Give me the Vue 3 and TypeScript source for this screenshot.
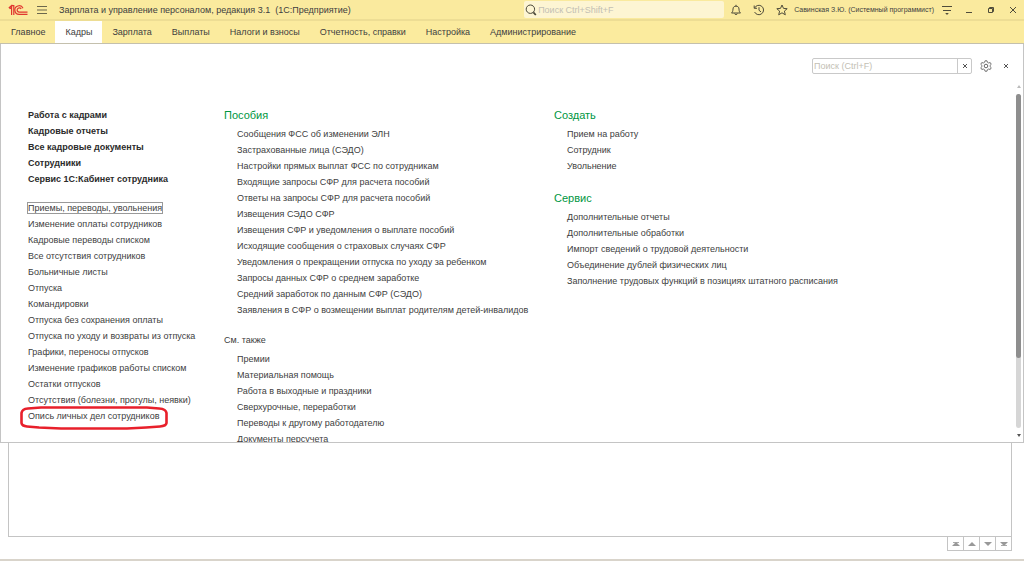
<script setup lang="ts">
import { ref } from 'vue'

const sections: string[] = [
  'Главное', 'Кадры', 'Зарплата', 'Выплаты', 'Налоги и взносы',
  'Отчетность, справки', 'Настройка', 'Администрирование',
]
const activeSection = ref('Кадры')

const primary: string[] = [
  'Работа с кадрами', 'Кадровые отчеты', 'Все кадровые документы',
  'Сотрудники', 'Сервис 1С:Кабинет сотрудника',
]
const journals: string[] = [
  'Приемы, переводы, увольнения', 'Изменение оплаты сотрудников',
  'Кадровые переводы списком', 'Все отсутствия сотрудников',
  'Больничные листы', 'Отпуска', 'Командировки',
  'Отпуска без сохранения оплаты', 'Отпуска по уходу и возвраты из отпуска',
  'Графики, переносы отпусков', 'Изменение графиков работы списком',
  'Остатки отпусков', 'Отсутствия (болезни, прогулы, неявки)',
  'Опись личных дел сотрудников',
]
const focused = journals[0]
const marked = journals[journals.length - 1]

const benefits: string[] = [
  'Сообщения ФСС об изменении ЭЛН', 'Застрахованные лица (СЭДО)',
  'Настройки прямых выплат ФСС по сотрудникам',
  'Входящие запросы СФР для расчета пособий',
  'Ответы на запросы СФР для расчета пособий', 'Извещения СЭДО СФР',
  'Извещения СФР и уведомления о выплате пособий',
  'Исходящие сообщения о страховых случаях СФР',
  'Уведомления о прекращении отпуска по уходу за ребенком',
  'Запросы данных СФР о среднем заработке',
  'Средний заработок по данным СФР (СЭДО)',
  'Заявления в СФР о возмещении выплат родителям детей-инвалидов',
]
const seeAlso: string[] = [
  'Премии', 'Материальная помощь', 'Работа в выходные и праздники',
  'Сверхурочные, переработки', 'Переводы к другому работодателю',
  'Документы персучета',
]
const create: string[] = ['Прием на работу', 'Сотрудник', 'Увольнение']
const service: string[] = [
  'Дополнительные отчеты', 'Дополнительные обработки',
  'Импорт сведений о трудовой деятельности',
  'Объединение дублей физических лиц',
  'Заполнение трудовых функций в позициях штатного расписания',
]
const globalQuery = ref('')
const menuQuery = ref('')
</script>

<template>
  <div class="app">
    <header class="titlebar">
      <svg class="logo" viewBox="0 0 20 12" width="20" height="12" aria-label="1С" role="img">
        <g fill="none" stroke="#e0362f" stroke-width="1.2">
          <path d="M.8 4 3.600 1.600V11M3.600 1.600H5.800V11M1.600 4.800 3.600 3.400" />
          <path d="M15 4.200A4.300 4.300 0 1 0 11.300 10.400H19.500" />
          <path d="M13.200 4.800A2.200 2.200 0 1 0 11.300 8.200H19.500" />
        </g>
      </svg>
      <button class="icon burger" aria-label="Главное меню">
        <svg viewBox="0 0 10 10" width="10" height="10"><path d="M0 1.500H10M0 5H10M0 8.500H10" stroke="#6b674c" fill="none" /></svg>
      </button>
      <h1 class="title">Зарплата и управление персоналом, редакция 3.1&nbsp; (1С:Предприятие)</h1>
      <label class="global-search">
        <svg viewBox="0 0 12 12" width="12" height="12"><circle cx="5.4" cy="5.2" r="4.2" fill="none" stroke="#4a4738" /><path d="M8.4 8.4 10.8 11" stroke="#4a4738" stroke-width="1.7" /></svg>
        <input v-model="globalQuery" type="text" placeholder="Поиск Ctrl+Shift+F" aria-label="Глобальный поиск" />
      </label>
      <div class="tools">
        <button class="icon" aria-label="Уведомления">
          <svg viewBox="0 0 12 12" width="12" height="12"><path d="M1.500 9H10.500C9.300 7.900 9.100 6.900 9 5 8.900 3 7.800 2.200 6 2.200S3.100 3 3 5C2.900 6.900 2.700 7.900 1.500 9ZM6 2.200V.8M4.700 9.500C4.900 11 7.100 11 7.300 9.500" fill="none" stroke="#4f4c3b" /></svg>
        </button>
        <button class="icon" aria-label="История">
          <svg viewBox="0 0 12 12" width="12" height="12"><path d="M1.600 4A4.700 4.700 0 1 1 1.600 8M1.200 1.500V4.300H4M6 3.200V6.300L8 7.900" fill="none" stroke="#4f4c3b" /></svg>
        </button>
        <button class="icon" aria-label="Избранное">
          <svg viewBox="0 0 12 12" width="12" height="12"><path d="M6 1 7.500 4.400 11.200 4.700 8.400 7.100 9.300 10.800 6 8.800 2.700 10.800 3.600 7.100 .8 4.700 4.500 4.400Z" fill="none" stroke="#4f4c3b" /></svg>
        </button>
      </div>
      <button class="user">Савинская З.Ю. (Системный программист)</button>
      <div class="window-tools">
        <button class="icon" aria-label="Настройки окна">
          <svg viewBox="0 0 12 12" width="12" height="12"><path d="M1 2.500H11M2 6.500H10" fill="none" stroke="#4f4c3b" /><path d="M4.200 9H7.800L6 11Z" fill="#4f4c3b" /></svg>
        </button>
        <button class="icon" aria-label="Свернуть">
          <svg viewBox="0 0 12 12" width="12" height="12"><path d="M3 8.500H9" stroke="#4f4c3b" /></svg>
        </button>
        <button class="icon" aria-label="Развернуть">
          <svg viewBox="0 0 12 12" width="12" height="12"><path d="M3.500 4.500H7.500V8.500H3.500ZM4.500 4.500V3.500H8.500V7.500H7.500" fill="none" stroke="#4f4c3b" /></svg>
        </button>
        <button class="icon" aria-label="Закрыть">
          <svg viewBox="0 0 12 12" width="12" height="12"><path d="M3 3 9 9M9 3 3 9" stroke="#4f4c3b" /></svg>
        </button>
      </div>
    </header>

    <nav class="sections">
      <button
        v-for="s in sections"
        :key="s"
        :class="['section', { active: s === activeSection }]"
        @click="activeSection = s"
      >{{ s }}</button>
    </nav>

    <main class="menu">
      <div class="menu-tools">
        <div class="menu-search">
          <input v-model="menuQuery" type="text" placeholder="Поиск (Ctrl+F)" aria-label="Поиск в меню" />
          <button class="icon clear" aria-label="Очистить" @click="menuQuery = ''">
            <svg viewBox="0 0 6 6" width="6" height="6"><path d="M1 1 5 5M5 1 1 5" stroke="#555" /></svg>
          </button>
        </div>
        <button class="icon" aria-label="Настройка меню">
          <svg viewBox="0 0 12 12" width="12" height="12"><path d="M5 .8H7L7.400 2.300 8.700 3 10.200 2.500 11.200 4.300 10.100 5.300V6.700L11.200 7.700 10.200 9.500 8.700 9 7.400 9.700 7 11.200H5L4.600 9.700 3.300 9 1.800 9.500 .8 7.700 1.900 6.700V5.300L.8 4.300 1.800 2.500 3.300 3 4.600 2.300Z" fill="none" stroke="#666" stroke-width=".9" /><circle cx="6" cy="6" r="1.800" fill="none" stroke="#666" /></svg>
        </button>
        <button class="icon" aria-label="Закрыть меню">
          <svg viewBox="0 0 6 6" width="6" height="6"><path d="M1 1 5 5M5 1 1 5" stroke="#555" /></svg>
        </button>
      </div>

      <div class="menu-body">
        <div class="columns">
          <div class="column">
            <ul class="list strong">
              <li v-for="t in primary" :key="t"><a href="#">{{ t }}</a></li>
            </ul>
            <ul class="list journals">
              <li v-for="t in journals" :key="t">
                <a href="#" :class="{ focused: t === focused, marked: t === marked }">{{ t }}<svg
                  v-if="t === marked" class="marker" viewBox="0 0 150 24" width="150" height="24"
                ><path d="M9 2.500 22 1.500H128L140 2.500Q147 3 147.500 7V17Q147 20 141 20.500L127 21.500 108 22.500H42L20 21.500 8 20.500Q3 20 2.500 17V7Q3 3 9 2.500Z" fill="none" stroke="#e8202b" stroke-width="2.600" /></svg></a>
              </li>
            </ul>
          </div>
          <div class="column">
            <h2>Пособия</h2>
            <ul class="list nested">
              <li v-for="t in benefits" :key="t"><a href="#">{{ t }}</a></li>
            </ul>
            <h3>См. также</h3>
            <ul class="list nested">
              <li v-for="t in seeAlso" :key="t"><a href="#">{{ t }}</a></li>
            </ul>
          </div>
          <div class="column">
            <h2>Создать</h2>
            <ul class="list nested">
              <li v-for="t in create" :key="t"><a href="#">{{ t }}</a></li>
            </ul>
            <h2>Сервис</h2>
            <ul class="list nested">
              <li v-for="t in service" :key="t"><a href="#">{{ t }}</a></li>
            </ul>
          </div>
        </div>
        <div class="scrollbar" aria-hidden="true">
          <svg viewBox="0 0 4 3" width="4" height="3"><path d="M0 3H4L2 0Z" fill="#bbb" /></svg>
          <div class="track"><div class="thumb"></div></div>
          <svg viewBox="0 0 4 3" width="4" height="3"><path d="M0 0H4L2 3Z" fill="#555" /></svg>
        </div>
      </div>
    </main>

    <section class="form">
      <div class="form-table"></div>
      <div class="pager">
        <button aria-label="В начало"><svg viewBox="0 0 8 6" width="8" height="6"><path d="M1 1.500H7" stroke="#aaa" /><path d="M0 5H8L4 1Z" fill="#999" /></svg></button>
        <button aria-label="Вверх"><svg viewBox="0 0 8 6" width="8" height="6"><path d="M0 5H8L4 1Z" fill="#999" /></svg></button>
        <button aria-label="Вниз"><svg viewBox="0 0 8 6" width="8" height="6"><path d="M0 1H8L4 5Z" fill="#999" /></svg></button>
        <button aria-label="В конец"><svg viewBox="0 0 8 6" width="8" height="6"><path d="M1 4.500H7" stroke="#aaa" /><path d="M0 1H8L4 5Z" fill="#999" /></svg></button>
      </div>
    </section>
  </div>
</template>

<style>
body {
  background: #fff;
}
</style>

<style scoped>
.app {
  display: flex;
  flex-direction: column;
  height: 100vh;
  box-sizing: border-box;
  border-bottom: 2px solid #d9d4cb;
  font: 9px/16px "Liberation Sans", Arial, sans-serif;
  color: #404040;
}
button,
input {
  font: inherit;
  color: inherit;
  margin: 0;
  padding: 0;
  border: 0;
  background: none;
  border-radius: 0;
}
input {
  min-width: 0;
  outline: none;
}
svg {
  display: block;
  flex: none;
}
.icon {
  display: flex;
  align-items: center;
  justify-content: center;
}
.titlebar {
  display: flex;
  align-items: center;
  flex: none;
  height: 19px;
  padding: 0 5px 0 8px;
  background: #faea9e;
  border-bottom: 2px solid #eddd94;
}
.burger {
  margin: 0 12px 0 9px;
}
.title {
  flex: 1;
  margin: 0;
  font-size: 9px;
  font-weight: normal;
  white-space: nowrap;
}
.global-search {
  display: flex;
  align-items: center;
  width: 200px;
  height: 17px;
  border-radius: 2px;
  background: #fdf5d3;
}
.global-search svg {
  margin-left: 1px;
}
.global-search input {
  flex: 1;
  padding-left: 1px;
}
input::placeholder {
  color: #c3c0b4;
  opacity: 1;
}
.tools {
  display: flex;
  gap: 11px;
  margin: 0 6px;
}
.user {
  font-size: 7px;
  white-space: nowrap;
}
.window-tools {
  display: flex;
  gap: 10px;
  margin-left: 7px;
}
.sections {
  display: flex;
  flex: none;
  height: 22px;
  padding-left: 1px;
  background: #fbeb9e;
  border-bottom: 1px solid #c4c0ad;
}
.section {
  padding: 0 10px;
  white-space: nowrap;
}
.section.active {
  background: #fff;
}
.menu {
  display: flex;
  flex-direction: column;
  flex: 1;
  min-height: 0;
  border: 1px solid #c4c4c4;
  border-top: 0;
}
.menu-tools {
  display: flex;
  align-items: center;
  justify-content: flex-end;
  gap: 8px;
  padding: 14px 11px 10px 0;
}
.menu-search {
  display: flex;
  width: 160px;
  height: 16px;
  box-sizing: border-box;
  border: 1px solid #c9c9c9;
  border-radius: 2px;
}
.menu-search input {
  flex: 1;
  padding-left: 1px;
}
.clear {
  width: 14px;
  border-left: 1px solid #c9c9c9;
}
.menu-tools > .icon {
  width: 12px;
}
.menu-body {
  display: flex;
  flex: 1;
  min-height: 0;
}
.columns {
  display: grid;
  grid-template-columns: 196px 330px 1fr;
  flex: 1;
  padding: 23px 0 0 27px;
  overflow: hidden;
}
.column {
  min-width: 0;
}
.list {
  margin: 0;
  padding: 0;
  list-style: none;
  white-space: nowrap;
}
.list a {
  color: inherit;
  text-decoration: none;
}
.list.strong {
  font-weight: bold;
  color: #2b2b2b;
}
.list.journals {
  margin-top: 13px;
}
.list.nested {
  padding-left: 13px;
}
.focused {
  outline: 1px solid #999;
}
.marked {
  position: relative;
}
.marker {
  position: absolute;
  top: -5px;
  left: -9px;
}
h2,
h3 {
  margin: 0 0 3px;
  font-size: 11px;
  font-weight: normal;
  color: #00963f;
}
.list + h2 {
  margin-top: 16px;
}
h3 {
  margin-top: 14px;
  font-size: 9px;
  color: #404040;
}
.scrollbar {
  display: flex;
  flex-direction: column;
  align-items: center;
  gap: 6px;
  width: 9px;
  padding: 1px 0 5px;
}
.track {
  flex: 1;
  width: 5px;
  border-radius: 3px;
  background: #d6d6d6;
}
.thumb {
  height: 79%;
  border-radius: 3px;
  background: #8e8e8e;
}
.form {
  flex: none;
  padding: 0 12px 8px 8px;
}
.form-table {
  height: 93px;
  border: 1px solid #c4c4c4;
  border-top: 0;
}
.pager {
  display: flex;
  justify-content: flex-end;
}
.pager button {
  display: flex;
  align-items: center;
  justify-content: center;
  width: 16px;
  height: 14px;
  border: 1px solid #c4c4c4;
  border-width: 0 0 1px 1px;
}
.pager button:last-child {
  width: 17px;
  border-right-width: 1px;
}
</style>
